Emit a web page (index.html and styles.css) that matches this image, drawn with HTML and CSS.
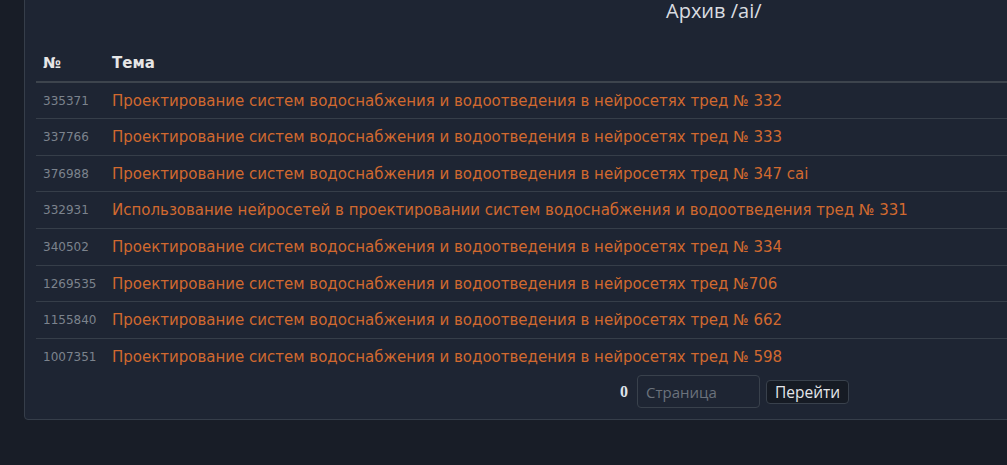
FILE: index.html
```html
<!DOCTYPE html>
<html lang="ru">
<head>
<meta charset="utf-8">
<title>Архив /ai/</title>
<link rel="stylesheet" href="styles.css">
</head>
<body>
<div class="page">
  <div class="panel">
    <h1 class="title">Архив /ai/</h1>
    <table class="threads">
      <thead>
        <tr><th class="col-num">№</th><th>Тема</th></tr>
      </thead>
      <tbody>
        <tr><td class="num">335371</td><td><a href="#">Проектирование систем водоснабжения и водоотведения в нейросетях тред № 332</a></td></tr>
        <tr><td class="num">337766</td><td><a href="#">Проектирование систем водоснабжения и водоотведения в нейросетях тред № 333</a></td></tr>
        <tr><td class="num">376988</td><td><a href="#">Проектирование систем водоснабжения и водоотведения в нейросетях тред № 347 cai</a></td></tr>
        <tr><td class="num">332931</td><td><a href="#">Использование нейросетей в проектировании систем водоснабжения и водоотведения тред № 331</a></td></tr>
        <tr><td class="num">340502</td><td><a href="#">Проектирование систем водоснабжения и водоотведения в нейросетях тред № 334</a></td></tr>
        <tr><td class="num">1269535</td><td><a href="#">Проектирование систем водоснабжения и водоотведения в нейросетях тред №706</a></td></tr>
        <tr><td class="num">1155840</td><td><a href="#">Проектирование систем водоснабжения и водоотведения в нейросетях тред № 662</a></td></tr>
        <tr><td class="num">1007351</td><td><a href="#">Проектирование систем водоснабжения и водоотведения в нейросетях тред № 598</a></td></tr>
      </tbody>
    </table>
    <form class="pager">
      <b class="current">0</b>
      <input class="page-input" type="text" placeholder="Страница">
      <button class="go" type="button">Перейти</button>
    </form>
  </div>
</div>
</body>
</html>
```

FILE: styles.css
```css
html, body {
  margin: 0;
  padding: 0;
  background: #181d27;
  overflow: hidden;
  height: 100%;
}

.page {
  padding-left: 24px;
}

.panel {
  margin-top: -30px;
  width: 1100px;
  background: #1e2533;
  border: 1px solid #363e4a;
  border-radius: 4px;
  padding: 0 0 11px 11px;
}

.title {
  margin: 0;
  padding: 26px 0 0 630px;
  font-family: "Open Sans", "DejaVu Sans", sans-serif;
  font-weight: 400;
  font-size: 20px;
  line-height: 28px;
  color: #d9dce0;
}

.threads {
  margin-top: 20px;
  width: 100%;
  border-collapse: collapse;
  font-family: "DejaVu Sans", Verdana, sans-serif;
}

.threads th {
  text-align: left;
  font-size: 15px;
  font-weight: 700;
  color: #e6e6e6;
  padding: 9px 7px 7px;
  line-height: 19.6px;
  border-bottom: 2px solid #3d444d;
}

.threads .col-num {
  width: 55px;
}

.threads td {
  padding: 9px 7px 7px;
  line-height: 19.6px;
  border-bottom: 1px solid #363e49;
  font-size: 15px;
  white-space: nowrap;
}

.threads tbody tr:last-child td {
  border-bottom: none;
}

.threads .num {
  font-size: 12px;
  color: #7c838d;
}

.threads a {
  color: #d1692f;
  text-decoration: none;
}

.pager {
  display: flex;
  align-items: center;
  gap: 6px;
  margin: 1px 0 0;
  padding-left: 584px;
}

.current {
  font-family: "Liberation Serif", "Times New Roman", serif;
  font-size: 16px;
  font-weight: 700;
  color: #dfe3ea;
  margin-right: 3px;
}

.page-input {
  box-sizing: border-box;
  width: 123px;
  height: 33px;
  background: #1e2533;
  border: 1px solid #39414c;
  border-radius: 4px;
  padding: 0 8px;
  font-family: "Open Sans", "Liberation Sans", sans-serif;
  font-size: 15px;
  color: #d0d4da;
}

.page-input::placeholder {
  color: #6b727c;
}

.go {
  box-sizing: border-box;
  height: 24px;
  padding: 0 8px;
  background: #161b24;
  border: 1px solid #39414c;
  border-radius: 4px;
  font-family: "Open Sans", "Liberation Sans", sans-serif;
  font-size: 15.5px;
  line-height: 20px;
  color: #e4e6ea;
}
```
